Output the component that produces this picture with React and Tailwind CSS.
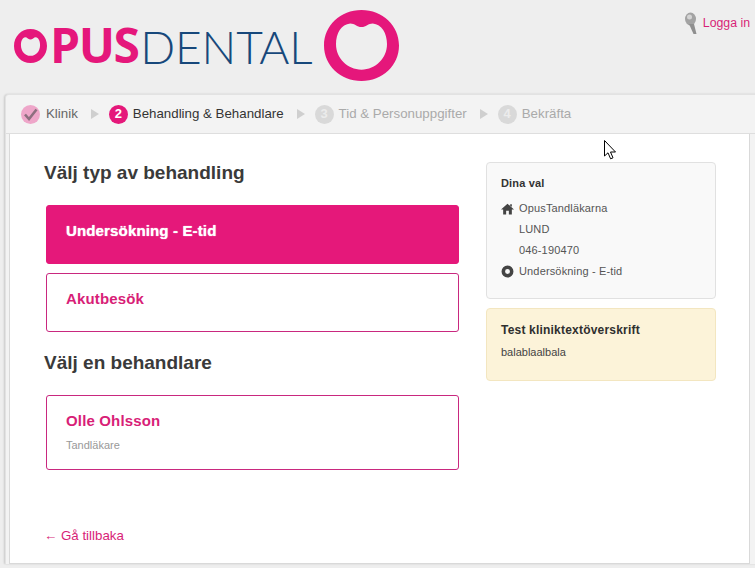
import React from "react";

function Ring({ w, h, thick, className = "" }) {
  const d = thick
    ? "M50 0C78 0 100 22 100 50C100 78 78 100 50 100C22 100 0 78 0 50C0 22 22 0 50 0ZM34 24C26 25 21 34 21 47C21 65 33 79 50 79C67 79 79 65 79 47C79 34 74 25 66 24C60 24 56 31 50 31C44 31 40 24 34 24Z"
    : "M50 0C78 0 100 22 100 50C100 78 78 100 50 100C22 100 0 78 0 50C0 22 22 0 50 0ZM35 19C23 20 16 33 16 48C16 68 31 84 50 84C69 84 84 68 84 48C84 33 77 20 65 19C59 19 56 24 50 24C44 24 41 19 35 19Z";
  return (
    <svg width={w} height={h} viewBox="0 0 100 100" preserveAspectRatio="none" className={className}>
      <path fillRule="evenodd" fill="#e5177b" d={d} />
    </svg>
  );
}

function StepNum({ n, active }) {
  return (
    <span
      className={
        active
          ? "w-[19px] h-[19px] rounded-full bg-[#e5187a] text-white text-[13px] font-bold flex items-center justify-center leading-none pb-[2px]"
          : "w-[19px] h-[19px] rounded-full bg-[#d9d9d9] text-[#ececec] text-[13px] font-bold flex items-center justify-center leading-none pb-[2px]"
      }
    >
      {n}
    </span>
  );
}

function Arrow() {
  return <span className="block w-0 h-0 border-y-[5px] border-y-transparent border-l-[8px] border-l-[#cfcfcf]" />;
}

function Choice({ title, sub, active, height }) {
  return (
    <div
      className={
        (active
          ? "bg-[#e5187a] border-[#e5187a] text-white [text-shadow:0_0_1px_#ffffff] "
          : "bg-white border-[#c9287f] text-[#d81e77] ") +
        "w-[413px] ml-[2px] border rounded-[3px] pl-[19px] " +
        height
      }
    >
      <div className="text-[15px] font-bold tracking-[0.15px] leading-[20px] pt-[15px]">{title}</div>
      {sub && <div className="text-[11px] text-[#999999] leading-[14px] mt-[7px]">{sub}</div>}
    </div>
  );
}

export default function App() {
  return (
    <div
      className="relative w-[755px] h-[568px] overflow-hidden bg-[#eeeeee]"
      style={{ fontFamily: '"Liberation Sans", Arial, sans-serif' }}
    >
      <header className="h-[94px] flex justify-between">
        <div className="flex items-center pl-[14px] h-[90px]">
          <Ring w={33} h={34} thick className="mt-[2px]" />
          <span
            className="text-[48px] leading-none font-bold text-[#e5177b] tracking-[-1.5px] ml-[3px]"
            style={{ fontFamily: '"Open Sans", sans-serif' }}
          >
            PUS
          </span>
          <span
            className="text-[46px] leading-none font-light text-[#17487b] tracking-[-0.2px] ml-[2px] mt-[3px]"
            style={{ fontFamily: "Lato, sans-serif" }}
          >
            DENTAL
          </span>
          <Ring w={75} h={71} className="ml-[12px]" />
        </div>
        <div className="flex items-start pt-[12px] pr-[5px] gap-[5px]">
          <svg width="14" height="23" viewBox="0 0 14 23">
            <ellipse cx="6.5" cy="7" rx="5.5" ry="6.5" fill="#a3a3a3" />
            <ellipse cx="5.5" cy="5" rx="2.5" ry="2.5" fill="#d4d4d4" />
            <path d="M5 12 L10 12 L12.5 22 L9.5 22 Z" fill="#8f8f8f" />
          </svg>
          <a className="text-[12.3px] leading-[22px] text-[#d81e77]">Logga in</a>
        </div>
      </header>

      <main className="ml-[5px] w-[800px] h-[470px] bg-[#f3f3f3] border-t border-l border-[#e2e2e2] rounded-tl-[4px] shadow-[-1px_0_2px_rgba(0,0,0,0.15)] flex flex-col">
        <nav className="h-[39px] flex items-center pl-[15px] text-[13.3px] border-b border-[#dedede] shrink-0">
          <span className="w-[19px] h-[19px] rounded-full bg-[#eea6c9] flex items-center justify-center">
            <svg width="15" height="13" viewBox="0 0 15 13">
              <path d="M2 6.5 L6 11 L13.5 1.5" fill="none" stroke="#8d6f7f" strokeWidth="2.6" />
            </svg>
          </span>
          <span className="ml-[6px] text-[#666666]">Klinik</span>
          <span className="ml-[13px]"><Arrow /></span>
          <span className="ml-[10px]"><StepNum n="2" active /></span>
          <span className="ml-[5px] text-[#333333]">Behandling &amp; Behandlare</span>
          <span className="ml-[13px]"><Arrow /></span>
          <span className="ml-[10px]"><StepNum n="3" /></span>
          <span className="ml-[5px] text-[#aaaaaa]">Tid &amp; Personuppgifter</span>
          <span className="ml-[13px]"><Arrow /></span>
          <span className="ml-[10px]"><StepNum n="4" /></span>
          <span className="ml-[5px] text-[#aaaaaa]">Bekräfta</span>
        </nav>

        <div className="ml-[3px] w-[741px] h-[430px] bg-white border-l border-r border-b border-[#d9d9d9] flex shrink-0">
          <section className="w-[476px] pl-[34px] flex flex-col">
            <h2 className="text-[19px] font-bold text-[#3a3a3a] leading-[24px] mt-[27px]">Välj typ av behandling</h2>
            <div className="mt-[20px] flex flex-col gap-[9px]">
              <Choice title="Undersökning - E-tid" active height="h-[59px]" />
              <Choice title="Akutbesök" height="h-[59px]" />
            </div>
            <h2 className="text-[19px] font-bold text-[#3a3a3a] leading-[24px] mt-[19px]">Välj en behandlare</h2>
            <div className="mt-[20px]">
              <Choice title="Olle Ohlsson" sub="Tandläkare" height="h-[75px]" />
            </div>
            <a className="mt-[57px] text-[13.3px] leading-[18px] text-[#d81e77]">← Gå tillbaka</a>
          </section>

          <aside className="w-[230px] pt-[28px] flex flex-col gap-[9px]">
            <div className="h-[137px] bg-[#f9f9f9] border border-[#e1e1e1] rounded-[4px] pl-[14px] pt-[13px] text-[11px] tracking-[0.15px] text-[#555555]">
              <div className="font-bold text-[#333333] leading-[14px] mb-[8px]">Dina val</div>
              <div className="flex items-center h-[21px]">
                <svg width="13" height="13" viewBox="0 0 24 24" className="mr-[5px]">
                  <path d="M12 3 L24 14 L20 14 L20 23 L14.5 23 L14.5 16 L9.5 16 L9.5 23 L4 23 L4 14 L0 14 Z" fill="#444444" />
                  <path d="M17 4 H20 V9 L17 6 Z" fill="#444444" />
                </svg>
                OpusTandläkarna
              </div>
              <div className="h-[21px] flex items-center pl-[18px]">LUND</div>
              <div className="h-[21px] flex items-center pl-[18px]">046-190470</div>
              <div className="flex items-center h-[21px]">
                <svg width="13" height="13" viewBox="0 0 24 24" className="mr-[5px]">
                  <path fillRule="evenodd" fill="#444444" d="M12 1 A11 11 0 1 1 12 23 A11 11 0 1 1 12 1 Z M12 7.5 A4.5 4.5 0 1 0 12 16.5 A4.5 4.5 0 1 0 12 7.5 Z" />
                </svg>
                Undersökning - E-tid
              </div>
            </div>
            <div className="h-[73px] bg-[#fcf3d9] border border-[#f3e6c0] rounded-[4px] pl-[14px] pt-[13px]">
              <div className="text-[12px] font-bold tracking-[0.2px] text-[#2f2f2f] leading-[16px]">Test kliniktextöverskrift</div>
              <div className="text-[11px] text-[#444444] leading-[14px] mt-[7px]">balablaalbala</div>
            </div>
          </aside>
        </div>
      </main>

      <svg width="14" height="21" viewBox="0 0 14 21" className="absolute left-[604px] top-[140px]">
        <path d="M0.5 0.5 L0.5 16 L4 12.8 L6.6 18.8 L9 17.8 L6.5 12 L11.5 12 Z" fill="#ffffff" stroke="#000000" strokeWidth="1" />
      </svg>
    </div>
  );
}
